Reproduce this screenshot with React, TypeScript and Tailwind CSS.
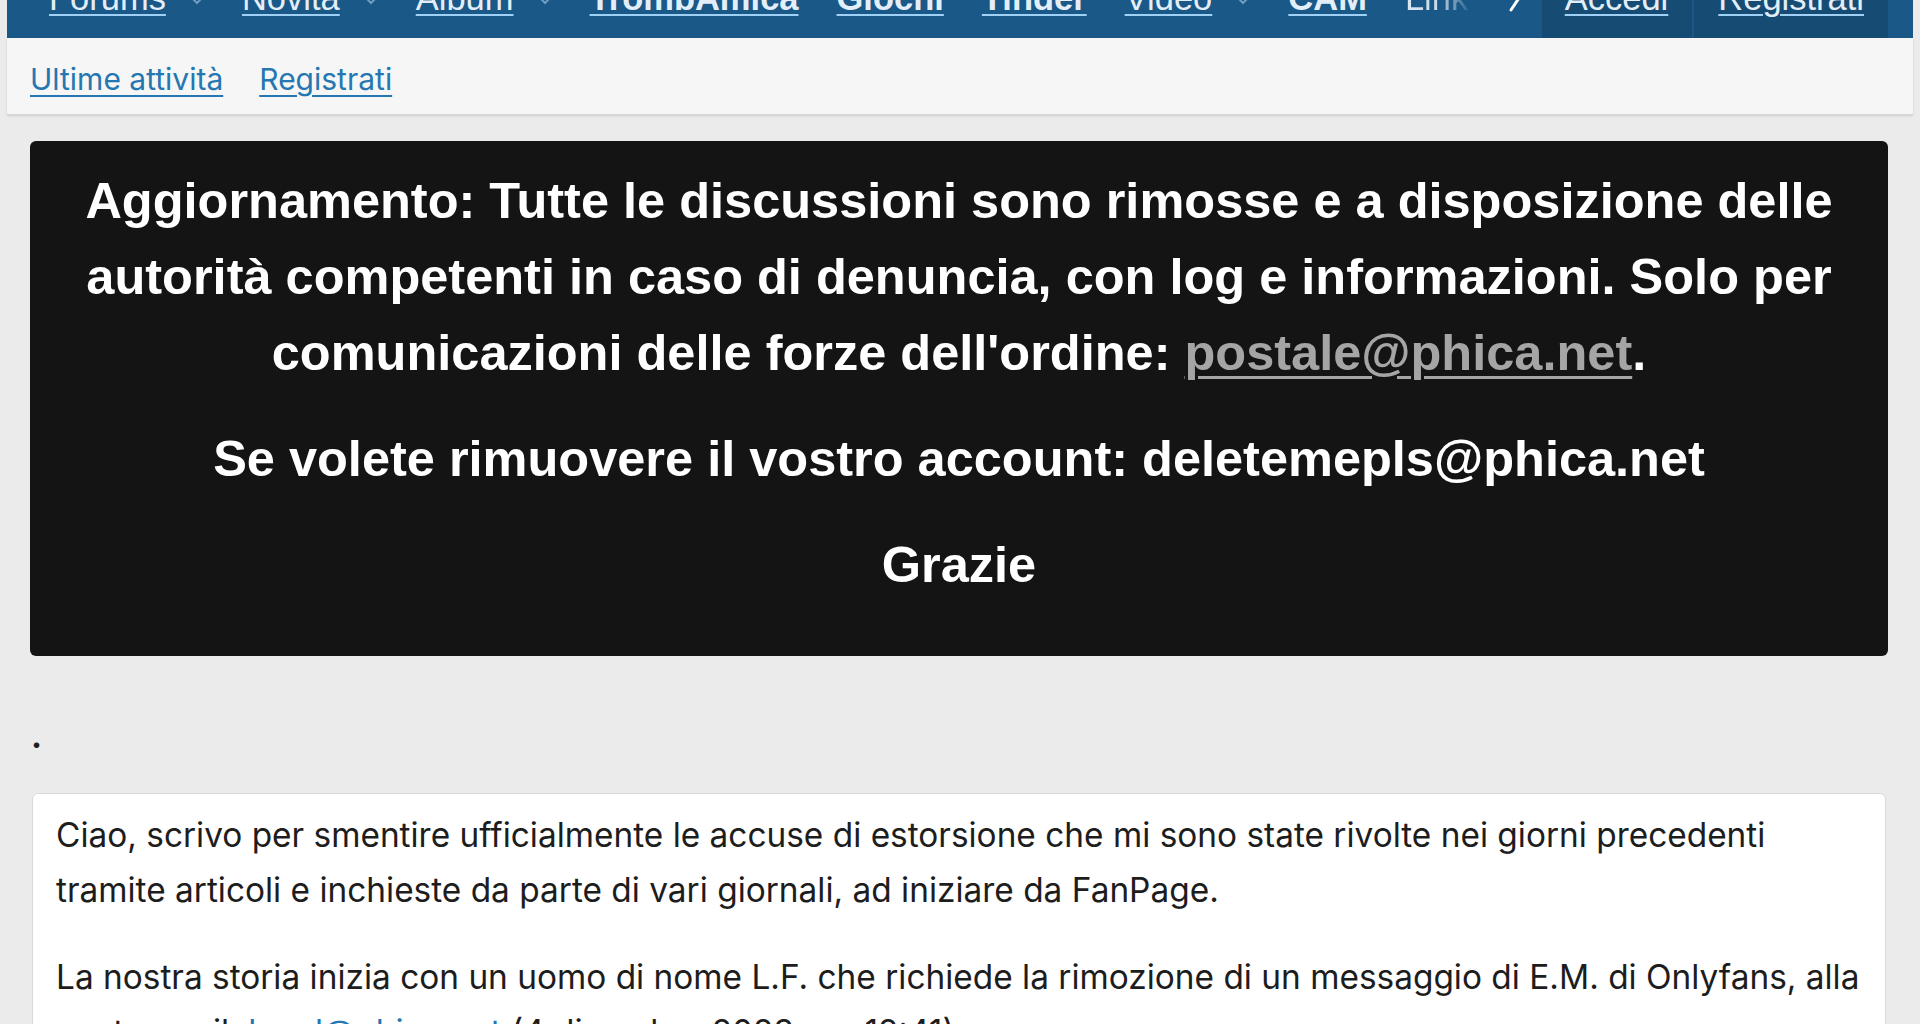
import React from "react";

const navFont = { fontFamily: '"Liberation Sans", Arial, sans-serif' };

function Chevron() {
  return (
    <svg width="14" height="10" viewBox="0 0 14 10" className="ml-[24px] self-start mt-[-3px]" aria-hidden>
      <path d="M3 2 L7 6 L11 2" fill="none" stroke="#6f9cc2" strokeWidth="2" strokeLinecap="round" />
    </svg>
  );
}

function NavItem({ label, bold, chevron }: { label: string; bold?: boolean; chevron?: boolean }) {
  return (
    <div className="flex shrink-0">
      <span
        className={`text-[34.5px] leading-[34px] mt-[-19px] text-[#e3eef8] underline decoration-[#9fd0f5] decoration-2 underline-offset-[4px] whitespace-nowrap ${bold ? "font-bold" : "font-normal"}`}
      >
        {label}
      </span>
      {chevron && <Chevron />}
    </div>
  );
}

export default function App() {
  return (
    <div className="h-[1024px] overflow-hidden bg-[#ebebeb]" style={{ fontFamily: 'Inter, "Noto Sans", sans-serif' }}>
      <div className="mx-[7px]">
        {/* top navigation */}
        <div className="h-[38px] bg-[#195887] flex overflow-hidden" style={navFont}>
          <div className="flex flex-1 pl-[42px] gap-[38px]">
            <NavItem label="Forums" chevron />
            <NavItem label="Novità" chevron />
            <NavItem label="Album" chevron />
            <NavItem label="TrombAmica" bold />
            <NavItem label="Giochi" bold />
            <NavItem label="Tinder" bold />
            <NavItem label="Video" chevron />
            <NavItem label="CAM" bold />
            <span className="text-[34.5px] leading-[34px] mt-[-19px] whitespace-nowrap bg-gradient-to-r from-[#dbe8f3] via-[#c6d9ea] to-transparent bg-clip-text text-transparent pr-[4px]">
              Link
            </span>
            <svg width="16" height="34" viewBox="0 0 16 34" className="mt-[-22px] ml-[-2px]" aria-hidden>
              <path d="M3 2 L13 17 L3 32" fill="none" stroke="#ffffff" strokeWidth="3" strokeLinecap="round" strokeLinejoin="round" />
            </svg>
          </div>
          <div className="flex h-full mr-[25px]">
            <div className="h-full bg-[#164c74] pl-[23px] pr-[24px] flex">
              <span className="text-[34.5px] leading-[34px] mt-[-19px] text-[#e3eef8] underline decoration-[#9fd0f5] decoration-2 underline-offset-[4px]">
                Accedi
              </span>
            </div>
            <div className="w-[2px] h-full bg-[#1b5684]" />
            <div className="h-full bg-[#164c74] pl-[24px] pr-[24px] flex">
              <span className="text-[34.5px] leading-[34px] mt-[-19px] text-[#e3eef8] underline decoration-[#9fd0f5] decoration-2 underline-offset-[4px]">
                Registrati
              </span>
            </div>
          </div>
        </div>

        {/* sub navigation */}
        <div className="h-[77px] bg-[#f6f6f6] border-b border-[#d6d6d6] shadow-[0_1px_2px_rgba(0,0,0,0.12)] flex items-center pl-[23px] gap-[36px] pt-[6px]">
          <a className="text-[30px] text-[#2577b1] underline decoration-[#2577b1] decoration-2 underline-offset-[5px]">
            Ultime attività
          </a>
          <a className="text-[30px] text-[#2577b1] underline decoration-[#2577b1] decoration-2 underline-offset-[5px]">
            Registrati
          </a>
        </div>
      </div>

      <div className="px-[30px] pr-[32px]">
        {/* notice */}
        <div
          className="mt-[26px] bg-[#141414] rounded-[6px] text-white text-center font-bold text-[50.5px] leading-[76px] pt-[22px] pb-[53px] px-[20px] flex flex-col gap-[30px]"
          style={navFont}
        >
          <p>
            Aggiornamento: Tutte le discussioni sono rimosse e a disposizione delle autorità competenti in caso di
            denuncia, con log e informazioni. Solo per comunicazioni delle forze dell'ordine:{" "}
            <a className="text-[#a5a5a5] underline decoration-[#a5a5a5] decoration-[3px] underline-offset-[6px]">
              postale@phica.net
            </a>
            .
          </p>
          <p>Se volete rimuovere il vostro account: deletemepls@phica.net</p>
          <p>Grazie</p>
        </div>

        <div className="mt-[53px] text-[33px] leading-[55px] font-bold text-[#1e1e1e] pl-[1px]">.</div>

        {/* post */}
        <div className="mt-[29px] mx-[2px] bg-white border border-[#dadada] rounded-[6px] pl-[23px] pr-[16px] pt-[14px] text-[33.4px] leading-[55px] text-[#1d1d1d] flex flex-col gap-[32px]">
          <p>
            Ciao, scrivo per smentire ufficialmente le accuse di estorsione che mi sono state rivolte nei giorni
            precedenti
            <br />
            tramite articoli e inchieste da parte di vari giornali, ad iniziare da FanPage.
          </p>
          <p>
            La nostra storia inizia con un uomo di nome L.F. che richiede la rimozione di un messaggio di E.M. di
            Onlyfans, alla nostra mail: <a className="text-[#2577b1]">legal@phica.net</a> (4 dicembre 2023 ore 12:41)
          </p>
        </div>
      </div>
    </div>
  );
}
